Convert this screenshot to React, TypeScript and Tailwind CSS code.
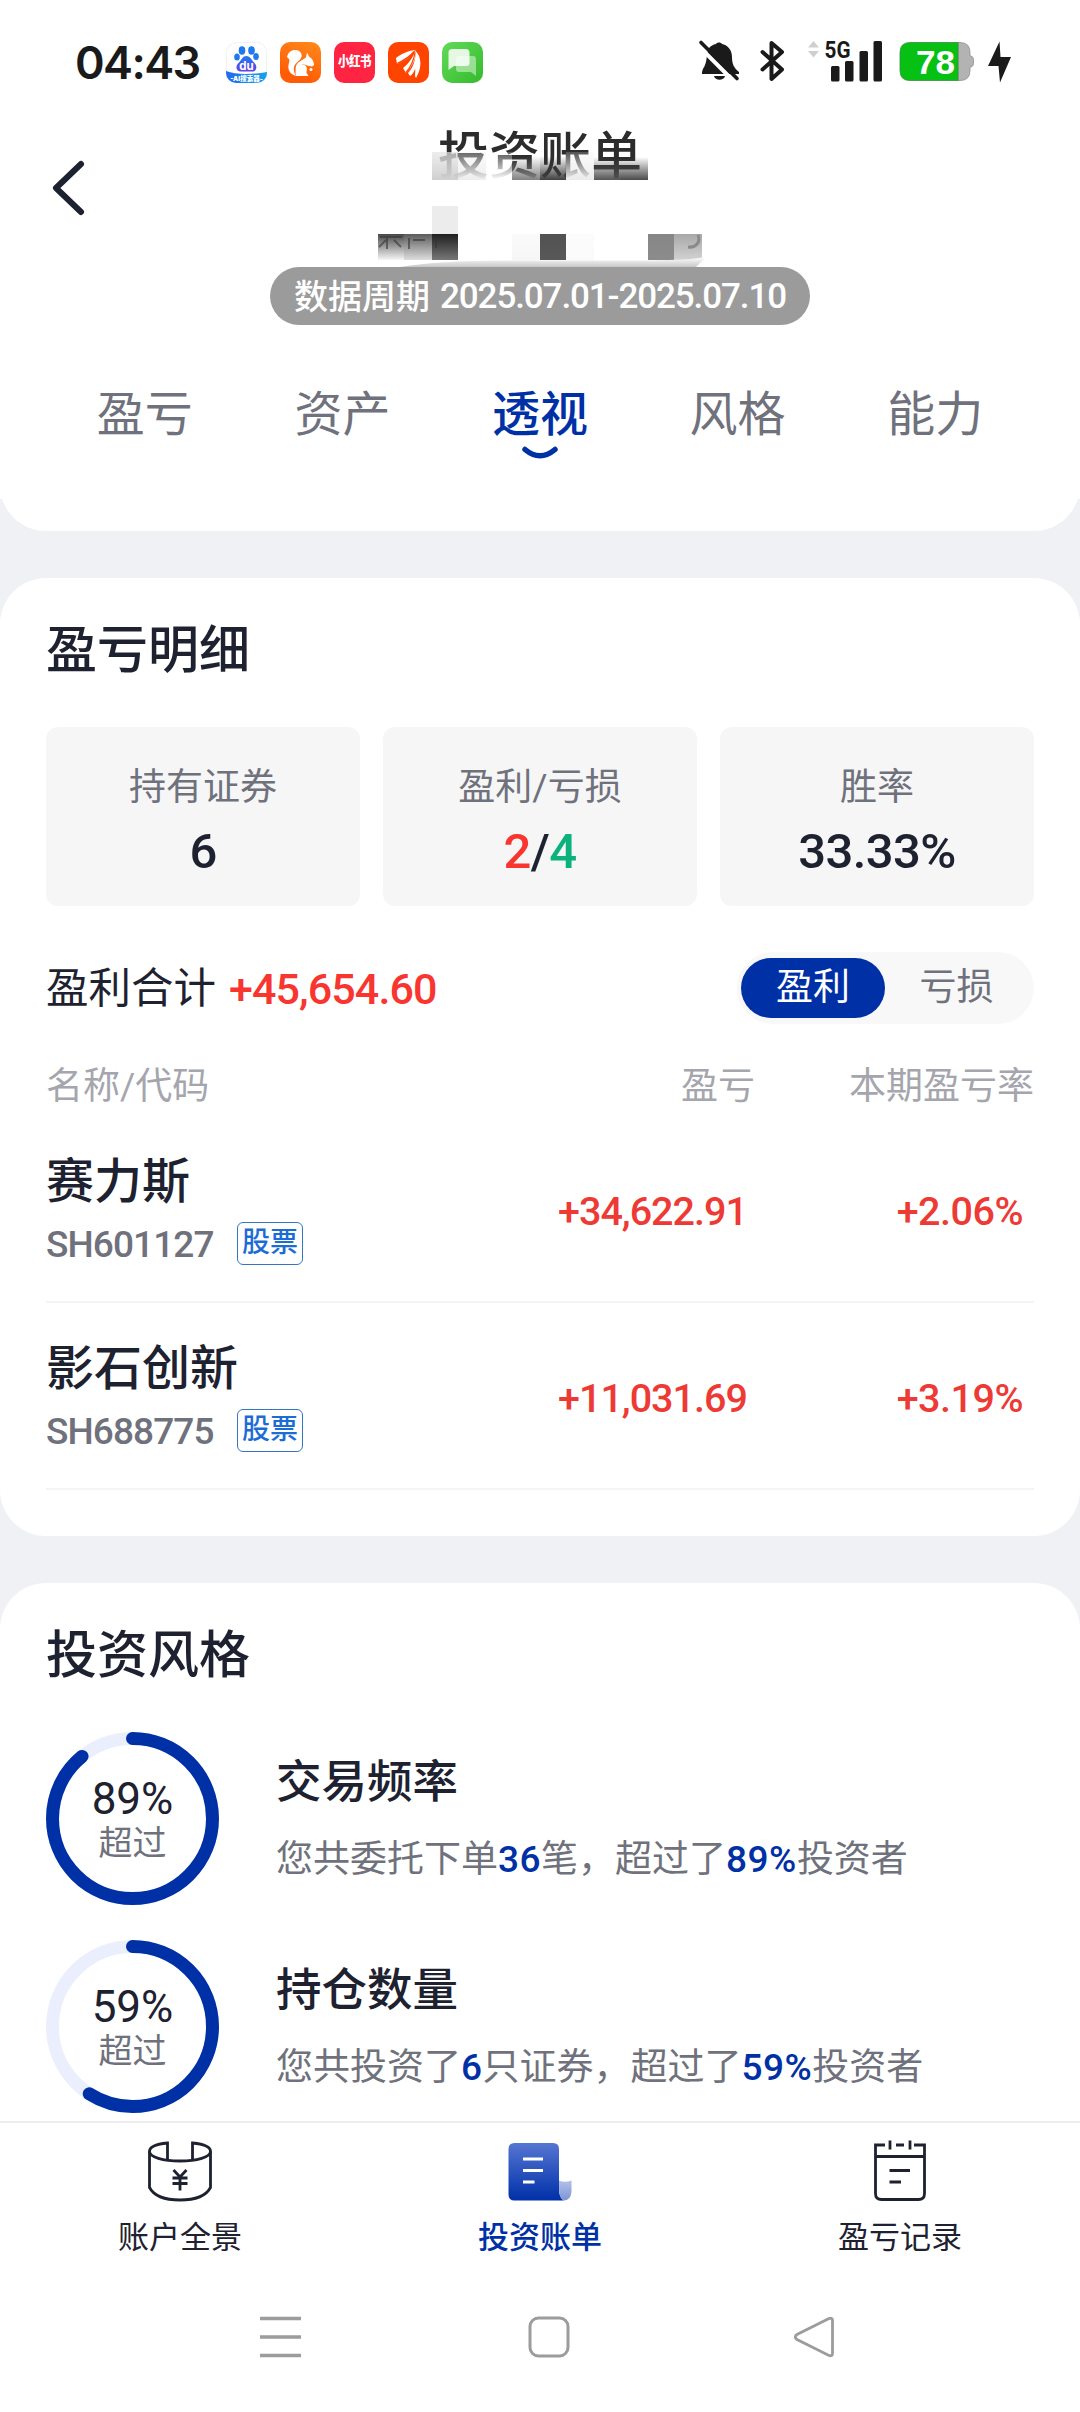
import React from "react";

const ink = "#1d2130";

function PawApp() {
  return (
    <svg width="41" height="41" viewBox="0 0 41 41">
      <defs>
        <linearGradient id="paw" x1="0" y1="0" x2="0" y2="1">
          <stop offset="0" stopColor="#1e7bf2" />
          <stop offset="1" stopColor="#6a3be8" />
        </linearGradient>
        <linearGradient id="wave" x1="0" y1="0" x2="1" y2="0">
          <stop offset="0" stopColor="#2469ee" />
          <stop offset="1" stopColor="#12a5ee" />
        </linearGradient>
        <clipPath id="pawClip">
          <rect width="41" height="41" rx="10" />
        </clipPath>
      </defs>
      <rect x=".5" y=".5" width="40" height="40" rx="10" fill="#fff" stroke="#f1f1f1" />
      <g clipPath="url(#pawClip)">
        <path d="M0 29 Q8 32 20 32 T41 30 V41 H0Z" fill="url(#wave)" />
        <ellipse cx="16" cy="8.500" rx="3.300" ry="4.200" fill="#1e78f0" />
        <ellipse cx="25.500" cy="8.500" rx="3.300" ry="4.200" fill="#1e78f0" />
        <ellipse cx="11" cy="15" rx="2.800" ry="3.600" fill="#1e78f0" />
        <ellipse cx="30" cy="14.500" rx="2.800" ry="3.600" fill="#1e78f0" />
        <path d="M20.500 14c4 0 5 4 8 7s2.500 8.500-2.500 8.500h-11c-5 0-6-5-2.500-8.500s4-7 8-7z" fill="url(#paw)" />
        <text x="20.500" y="27.500" textAnchor="middle" fontSize="11.500" fontWeight="700" fill="#fff" fontFamily="Inter">du</text>
        <text x="20.500" y="38.800" textAnchor="middle" fontSize="6.500" fontWeight="900" fill="#fff" fontFamily="Inter, 'Noto Sans CJK SC'">-AI搜索器-</text>
      </g>
    </svg>
  );
}

function SquirrelApp() {
  return (
    <svg width="41" height="41" viewBox="0 0 41 41">
      <defs>
        <linearGradient id="uc" x1="1" y1="0" x2="0.600" y2="1">
          <stop offset="0" stopColor="#ff8a1c" />
          <stop offset="1" stopColor="#ff5a05" />
        </linearGradient>
      </defs>
      <rect width="41" height="41" rx="10" fill="url(#uc)" />
      <path d="M7 15C8 10 12 7.500 16 8c4 .500 6.500 3.500 5.500 7-1 3-4 4.500-6 7-2.500 3-2 7.500.500 12-5.500-1.500-8.500-6-7.500-11 .500-3 1.500-4.500.500-6z" fill="#fff" />
      <path d="M27 10.500l2 4c2.500 1.500 5 4.500 5 8.500l-2 1.500-5-1c-2-1.500-5.500-1.500-8 .500-2 2-2.500 4.500-2 7.500-2.500-4-1.500-9 2-11.500l7-4.500z" fill="#fff" />
      <path d="M16 34c-1.500-6 1-11.500 6-11.500 4 0 6 3.500 4.500 7-.500 1.500 1 2.500 2 4.500z" fill="#fff" />
      <circle cx="31" cy="27.500" r="1.500" fill="#fff" />
    </svg>
  );
}

function RedNoteApp() {
  return (
    <div className="flex size-[41px] items-center justify-center rounded-[10px] bg-[#ff2442]">
      <span className="scale-y-[1.15] text-[11.500px] font-black tracking-[-0.5px] text-white">小红书</span>
    </div>
  );
}

function FeatherApp() {
  return (
    <svg width="41" height="41" viewBox="0 0 41 41">
      <rect width="41" height="41" rx="10" fill="#ff4400" />
      <path d="M8 16c5-4 11-7 19-8-3 5-8 10-18 14z" fill="#fff" />
      <path d="M15 26c5-4 10-10 12.500-18 1 7-2 15-9.500 23z" fill="#fff" />
      <path d="M20 31c5-5 8-13 7.500-22C34 15 34 26 28 36c-2-2 0-7-1-9-1 3-3 6-5 7z" fill="#fff" />
      <path d="M9 21.500c7-3 13-7 17-12M18 30.500c5-6 8-13 9-20" stroke="#ff4400" strokeWidth="1.300" fill="none" />
    </svg>
  );
}

function ChatApp() {
  return (
    <svg width="41" height="41" viewBox="0 0 41 41">
      <defs>
        <linearGradient id="chat" x1="0" y1="0" x2="1" y2="1">
          <stop offset="0" stopColor="#62da58" />
          <stop offset="1" stopColor="#35bb2c" />
        </linearGradient>
      </defs>
      <rect width="41" height="41" rx="10" fill="url(#chat)" />
      <path d="M17 14h14q3 0 3 3v17l-5-4H17q-3 0-3-3V17q0-3 3-3z" fill="#fff" opacity=".45" />
      <path d="M10 7h14q3.500 0 3.500 3.500V21q0 3-3 3H12l-5.500 4V10.500Q6.500 7 10 7z" fill="#fff" opacity=".85" />
    </svg>
  );
}

function StatusBar() {
  return (
    <div className="flex h-[124px] items-center pl-[75px] pr-[68px] text-[#1a1a1a]">
      <div className="w-[151px] text-[45px] leading-none font-semibold tracking-[-1.600px] font-[Inter]">04:43</div>
      <div className="flex gap-[13px]">
        <PawApp />
        <SquirrelApp />
        <RedNoteApp />
        <FeatherApp />
        <ChatApp />
      </div>
      <svg className="ml-auto" width="240" height="60" viewBox="698 33 240 60">
        <path d="M702 75h37v-2c-5-4-7-8-7-15 0-8-5-12-10-13-1-2-5-2-6 0-3 .500-5 2-7 4l-1 3c-1.500 3-1 10-3 14-1 3-3 4-3 9z" fill="#1a1a1a" />
        <path d="M714 77h11c-1 5-10 5-11 0z" fill="#1a1a1a" />
        <path d="M698.500 47L735 83.500" stroke="#fff" strokeWidth="4" />
        <path d="M701 43.500L737 79.500" stroke="#1a1a1a" strokeWidth="3.600" strokeLinecap="round" />
        <path d="M762.500 53L782 70.500L771.500 80V44L782 53L762.500 70.500" fill="none" stroke="#1a1a1a" strokeWidth="4" strokeLinecap="round" strokeLinejoin="round" />
        <path d="M808 48.500l5.500-6.500 5.500 6.500zM808 52h11l-5.500 6.500z" fill="#cfcfcf" />
        <text x="824.500" y="58.500" fontSize="24" fontWeight="700" fill="#1a1a1a" fontFamily="Roboto" textLength="26" lengthAdjust="spacingAndGlyphs">5G</text>
        <g fill="#1a1a1a">
          <rect x="831" y="67" width="8.500" height="15.500" rx="1.500" />
          <rect x="845" y="62" width="8.500" height="20.500" rx="1.500" />
          <rect x="859.500" y="52" width="8.500" height="30.500" rx="1.500" />
          <rect x="873.500" y="42" width="8.500" height="40.500" rx="1.500" />
        </g>
      </svg>
      <svg width="76" height="44" viewBox="900 41 76 44" className="-ml-[39px]">
        <path d="M959 43.500h2q10 0 10 10v3q3.500 1 3.500 4v4q0 3-3.500 4v3q0 10-10 10h-2z" fill="#b3b3b3" stroke="#8f8f8f" strokeWidth=".8" />
        <path d="M959 43.500h-48q-10 0-10 10v18q0 10 10 10h48z" fill="#07c014" stroke="#3a8a3c" strokeWidth=".8" />
        <text x="917" y="75" fontSize="34" fontWeight="700" fill="#fff" fontFamily="Liberation Sans" textLength="39" lengthAdjust="spacingAndGlyphs">78</text>
      </svg>
      <svg width="24" height="44" viewBox="989 41 24 44" className="ml-[13px]">
        <path d="M1000.500 42.500L989 67h10.500l1.500 16.500L1012 58h-10.500z" fill="#1a1a1a" />
      </svg>
    </div>
  );
}

type Block = { x: number; y: number; w: number; h: number; top: string; bottom: string };

const blocks: Block[] = [
  { x: 432, y: 152, w: 26, h: 28, top: "rgba(228,228,228,.7)", bottom: "#cfcfcf" },
  { x: 458, y: 152, w: 28, h: 28, top: "rgba(240,240,240,.3)", bottom: "#ededed" },
  { x: 486, y: 152, w: 26, h: 28, top: "rgba(255,255,255,.2)", bottom: "#ffffff" },
  { x: 512, y: 156, w: 28, h: 24, top: "rgba(130,130,130,0)", bottom: "#828282" },
  { x: 540, y: 156, w: 26, h: 24, top: "rgba(60,60,60,0)", bottom: "#404040" },
  { x: 566, y: 152, w: 28, h: 28, top: "rgba(238,238,238,.2)", bottom: "#ebebeb" },
  { x: 594, y: 157, w: 26, h: 23, top: "rgba(70,70,70,0)", bottom: "#555555" },
  { x: 620, y: 157, w: 28, h: 23, top: "rgba(70,70,70,0)", bottom: "#4b4b4b" },
  { x: 432, y: 206, w: 26, h: 28, top: "#ececec", bottom: "#ececec" },
  { x: 378, y: 234, w: 26, h: 26, top: "#484848", bottom: "#f6f6f6" },
  { x: 404, y: 234, w: 28, h: 26, top: "#5c5c5c", bottom: "#dddddd" },
  { x: 432, y: 234, w: 26, h: 26, top: "#1f1f1f", bottom: "#777777" },
  { x: 512, y: 234, w: 28, h: 26, top: "#fafafa", bottom: "#f6f6f6" },
  { x: 540, y: 234, w: 26, h: 26, top: "#525252", bottom: "#585858" },
  { x: 566, y: 234, w: 28, h: 26, top: "#fcfcfc", bottom: "#fafafa" },
  { x: 648, y: 234, w: 26, h: 26, top: "#868686", bottom: "#8c8c8c" },
  { x: 674, y: 234, w: 28, h: 26, top: "#a8a8a8", bottom: "#d2d2d2" },
];

function Mosaic() {
  return (
    <svg className="absolute left-1/2 top-0 -translate-x-1/2" width="360" height="143" viewBox="360 124 360 143">
      <defs>
        {blocks.map((b, i) => (
          <linearGradient key={i} id={"mosaic" + i} x1="0" y1="0" x2="0" y2="1">
            <stop offset="0" stopColor={b.top} />
            <stop offset="1" stopColor={b.bottom} />
          </linearGradient>
        ))}
        <linearGradient id="haze" x1="0" y1="0" x2="0" y2="1">
          <stop offset="0" stopColor="#fff" />
          <stop offset="1" stopColor="#c8c8c8" />
        </linearGradient>
      </defs>
      <rect x="360" y="180" width="360" height="26" fill="#fff" />
      {blocks.map((b, i) => (
        <rect key={i} x={b.x} y={b.y} width={b.w} height={b.h} fill={"url(#mosaic" + i + ")"} />
      ))}
      <path d="M380 237h22M387 237v12M386 240l-7 7M394 240l7 7M409 238v11M413 240h12M436 240v8" stroke="#333" strokeWidth="2" opacity=".6" fill="none" />
      <path d="M698 235c3 7-2 13-10 12" stroke="#8a8a8a" strokeWidth="3" fill="none" />
      <path d="M400 267Q440 260.500 500 260.500H650Q690 260 706 257L696 267z" fill="url(#haze)" />
    </svg>
  );
}

const tabs = ["盈亏", "资产", "透视", "风格", "能力"];

function Header() {
  return (
    <div>
      <div className="relative flex h-[243px] flex-col items-center">
        <svg className="absolute left-[50px] top-[34px]" width="36" height="60" viewBox="0 0 36 60">
          <path d="M31 6L6 30L31 54" fill="none" stroke={ink} strokeWidth="6" strokeLinecap="round" strokeLinejoin="round" />
        </svg>
        <h1 className="text-[51px] leading-[66px] font-medium text-[#2c2c2c]">投资账单</h1>
        <Mosaic />
        <div className="mt-[77px] flex h-[58px] w-[540px] shrink-0 items-center justify-center rounded-full bg-[#9b9b9b] pt-[2px] text-[34px] font-medium text-white">
          <span>数据周期</span>
          <span className="ml-[10px] text-[35px] tracking-[-1.100px]">2025.07.01-2025.07.10</span>
        </div>
      </div>
      <div className="grid h-[132px] grid-cols-5 px-[46px] pt-[15px]">
        {tabs.map((t) => (
          <div key={t} className="flex flex-col items-center">
            <span className={t === "透视" ? "text-[48px] leading-[66px] font-medium text-[#0030a6]" : "text-[48px] leading-[66px] text-[#6f717c]"}>{t}</span>
            {t === "透视" && (
              <svg className="-mt-[2px]" width="38" height="14" viewBox="0 0 38 14">
                <path d="M4 3.500Q19 16 34 3.500" fill="none" stroke="#0030a6" strokeWidth="5.500" strokeLinecap="round" />
              </svg>
            )}
          </div>
        ))}
      </div>
    </div>
  );
}

const stats = [
  { label: "持有证券", value: <>6</> },
  { label: "盈利/亏损", value: <><span className="text-[#f8352f]">2</span>/<span className="text-[#0cb27c]">4</span></> },
  { label: "胜率", value: <>33.33%</> },
];

const holdings = [
  { name: "赛力斯", code: "SH601127", gain: "+34,622.91", rate: "+2.06%" },
  { name: "影石创新", code: "SH688775", gain: "+11,031.69", rate: "+3.19%" },
];

function ProfitCard() {
  return (
    <section className="mt-[47px] h-[958px] rounded-[46px] bg-white px-[46px] pt-[40px]">
      <h2 className="text-[51px] leading-[66px] font-medium text-[#1d2130]">盈亏明细</h2>
      <div className="mt-[43px] grid grid-cols-3 gap-[23px]">
        {stats.map((s) => (
          <div key={s.label} className="flex h-[179px] flex-col items-center rounded-[12px] bg-[#f6f6f6] pt-[37px]">
            <span className="text-[37px] leading-[48px] text-[#6f717c]">{s.label}</span>
            <span className="mt-[11px] text-[49px] leading-[58px] font-medium tracking-[-0.600px] text-[#1d2130]">{s.value}</span>
          </div>
        ))}
      </div>
      <div className="mt-[46px] flex h-[72px] items-center justify-between">
        <div className="flex items-center pt-[1px] text-[#1d2130]">
          <span className="text-[42.500px] leading-[60px]">盈利合计</span>
          <span className="ml-[13px] text-[43px] leading-[60px] font-medium tracking-[-0.900px] text-[#f8352f]">+45,654.60</span>
        </div>
        <div className="flex h-[72px] w-[297px] items-center rounded-full bg-[#f8f8f8] pl-[4px] text-[37px]">
          <span className="flex h-[60px] w-[144px] items-center justify-center rounded-full bg-[#0030a6] text-white">盈利</span>
          <span className="flex h-[60px] w-[143px] items-center justify-center text-[#6f717c]">亏损</span>
        </div>
      </div>
      <div className="mt-[38px] mb-[4px] flex h-[50px] items-center text-[37px] text-[#a5a6ad]">
        <span className="flex-1">名称/代码</span>
        <span>盈亏</span>
        <span className="w-[279px] text-right">本期盈亏率</span>
      </div>
      {holdings.map((h) => (
        <div key={h.code} className="flex h-[187px] border-b-2 border-[#f3f4f6]">
          <div className="flex-1 pt-[36px]">
            <div className="text-[48px] leading-[60px] font-medium text-[#1d2130]">{h.name}</div>
            <div className="mt-[11px] flex h-[44px] items-center">
              <span className="w-[191px] text-[37px] font-medium tracking-[-0.900px] text-[#6f717c]">{h.code}</span>
              <span className="flex h-[43px] w-[66px] -translate-y-[2px] items-center justify-center rounded-[6px] border-[1.500px] border-[#3377c4] text-[28px] font-medium text-[#1c6cd6]">股票</span>
            </div>
          </div>
          <span className="w-[202px] pt-[67px] text-[39.500px] leading-[58px] font-medium tracking-[-1px] text-[#ee3a34]">{h.gain}</span>
          <span className="w-[274px] pr-[11px] pt-[67px] text-right text-[39.500px] leading-[58px] font-medium tracking-[-0.500px] text-[#ee3a34]">{h.rate}</span>
        </div>
      ))}
    </section>
  );
}

function Num({ children }: { children: React.ReactNode }) {
  return <span className="font-medium tracking-[0.500px] text-[#0030a6]">{children}</span>;
}

const styles = [
  { pct: 89, title: "交易频率", text: <>您共委托下单<Num>36</Num>笔，超过了<Num>89%</Num>投资者</> },
  { pct: 59, title: "持仓数量", text: <>您共投资了<Num>6</Num>只证券，超过了<Num>59%</Num>投资者</> },
];

function Ring({ pct }: { pct: number }) {
  const c = 2 * Math.PI * 80;
  return (
    <div className="relative size-[173px] shrink-0">
      <svg width="173" height="173" viewBox="0 0 173 173">
        <circle cx="86.500" cy="86.500" r="80" fill="none" stroke="#ebeffd" strokeWidth="13" />
        <circle
          cx="86.500"
          cy="86.500"
          r="80"
          fill="none"
          stroke="#0030a6"
          strokeWidth="13"
          strokeLinecap="round"
          strokeDasharray={`${(c * pct) / 100} ${c}`}
          transform="rotate(-90 86.500 86.500)"
        />
      </svg>
      <div className="absolute inset-0 flex flex-col items-center pt-[44px]">
        <span className="text-[44px] leading-[46px] text-[#1d2130]">{pct}%</span>
        <span className="mt-[1px] text-[34px] leading-[40px] text-[#6f717c]">超过</span>
      </div>
    </div>
  );
}

function StyleCard() {
  return (
    <section className="mt-[47px] h-[538px] overflow-hidden rounded-t-[46px] bg-white px-[46px] pt-[40px]">
      <h2 className="text-[51px] leading-[66px] font-medium text-[#1d2130]">投资风格</h2>
      <div className="mt-[43px] flex flex-col gap-[35px]">
        {styles.map((s) => (
          <div key={s.pct} className="flex">
            <Ring pct={s.pct} />
            <div className="ml-[57px] pt-[21px]">
              <div className="text-[45.500px] leading-[60px] font-medium text-[#1d2130]">{s.title}</div>
              <div className="mt-[21px] text-[37px] leading-[52px] text-[#6f717c]">{s.text}</div>
            </div>
          </div>
        ))}
      </div>
    </section>
  );
}

function AccountIcon() {
  return (
    <svg width="72" height="66" viewBox="0 0 72 66" fill="none" stroke={ink} strokeWidth="2.800">
      <path d="M23.500 20V4C13 5 5.500 8 5.500 12.500c0 5.500 13.500 9.500 30.500 9.500s30.500-4 30.500-9.500C66.500 8 59 5 48.500 4v16" />
      <path d="M5.500 12.500V48.500C10 57 22 61 36 61S62 57 66.500 48.500V12.500" />
      <path d="M29.500 31l6.500 7 6.500-7M28.500 39h15M28.500 44.500h15M36 38v13.500" />
    </svg>
  );
}

function BillIcon() {
  return (
    <svg width="72" height="66" viewBox="0 0 72 66">
      <defs>
        <linearGradient id="bill" x1="0" y1="0" x2="0" y2="1">
          <stop offset="0" stopColor="#5576d2" />
          <stop offset="1" stopColor="#0030a8" />
        </linearGradient>
        <linearGradient id="curl" x1="0" y1="0" x2="0" y2="1">
          <stop offset="0" stopColor="#b4c1ea" />
          <stop offset="1" stopColor="#7d93d6" />
        </linearGradient>
      </defs>
      <path d="M10.500 4H49q6 0 6 6v40q0 9 5 11.500H10.500q-6 0-6-6V10q0-6 6-6z" fill="url(#bill)" />
      <path d="M55 41.500q6 2.500 12.500 0V53q-1 8-7 8.500Q55 60 55 50z" fill="url(#curl)" />
      <path d="M19 20h20M19 31.500h20M19 43h11.500" stroke="#fff" strokeWidth="3" />
    </svg>
  );
}

function RecordIcon() {
  return (
    <svg width="72" height="66" viewBox="0 0 72 66" fill="none" stroke={ink} strokeWidth="2.800">
      <path d="M21 6h-9.500v48.500q0 6 6 6h37q6 0 6-6V6H50M32 6h8M26 1.500v9M46 1.500v9M11.500 17.500h49M25.500 31.500H46M25.500 43H37" />
    </svg>
  );
}

function BottomNav() {
  return (
    <nav className="grid h-[156px] grid-cols-3 border-t-2 border-[#ececee] text-[31px] leading-[40px] text-[#1d2130]">
      <div className="flex flex-col items-center pt-[16px]">
        <AccountIcon />
        <span className="mt-[13px]">账户全景</span>
      </div>
      <div className="flex flex-col items-center pt-[16px] text-[#0030a6]">
        <BillIcon />
        <span className="mt-[13px] font-medium">投资账单</span>
      </div>
      <div className="flex flex-col items-center pt-[16px]">
        <RecordIcon />
        <span className="mt-[13px]">盈亏记录</span>
      </div>
    </nav>
  );
}

function SystemNav() {
  return (
    <div className="flex h-[135px] items-center pb-[16px] pl-[259px]">
      <svg width="43" height="44" viewBox="0 0 43 44">
        <path d="M1 3.500h41M1 22h41M1 40.500h41" stroke="#9c9c9c" strokeWidth="3.600" />
      </svg>
      <svg className="ml-[225px]" width="44" height="44" viewBox="0 0 44 44">
        <rect x="3" y="3" width="38" height="38" rx="8.500" fill="none" stroke="#9c9c9c" strokeWidth="3" />
      </svg>
      <svg className="ml-[221px]" width="44" height="44" viewBox="0 0 44 44">
        <path d="M37 3.500L5 19.500q-3.500 2.500 0 5L37 40.500q3.500 1 3.500-2V5.500q0-3-3.500-2z" fill="none" stroke="#9c9c9c" strokeWidth="2.800" />
      </svg>
    </div>
  );
}

export default function App() {
  return (
    <div className="h-[2412px] w-[1080px] overflow-hidden bg-[#eff1f5] font-[Roboto,'Noto_Sans_CJK_SC',sans-serif]">
      <div className="h-[499px] bg-white">
        <StatusBar />
        <Header />
      </div>
      <div className="flex h-[32px] items-end overflow-hidden">
        <div className="h-[92px] w-full shrink-0 rounded-b-[46px] bg-white" />
      </div>
      <ProfitCard />
      <StyleCard />
      <div className="bg-white">
        <BottomNav />
        <SystemNav />
      </div>
    </div>
  );
}
